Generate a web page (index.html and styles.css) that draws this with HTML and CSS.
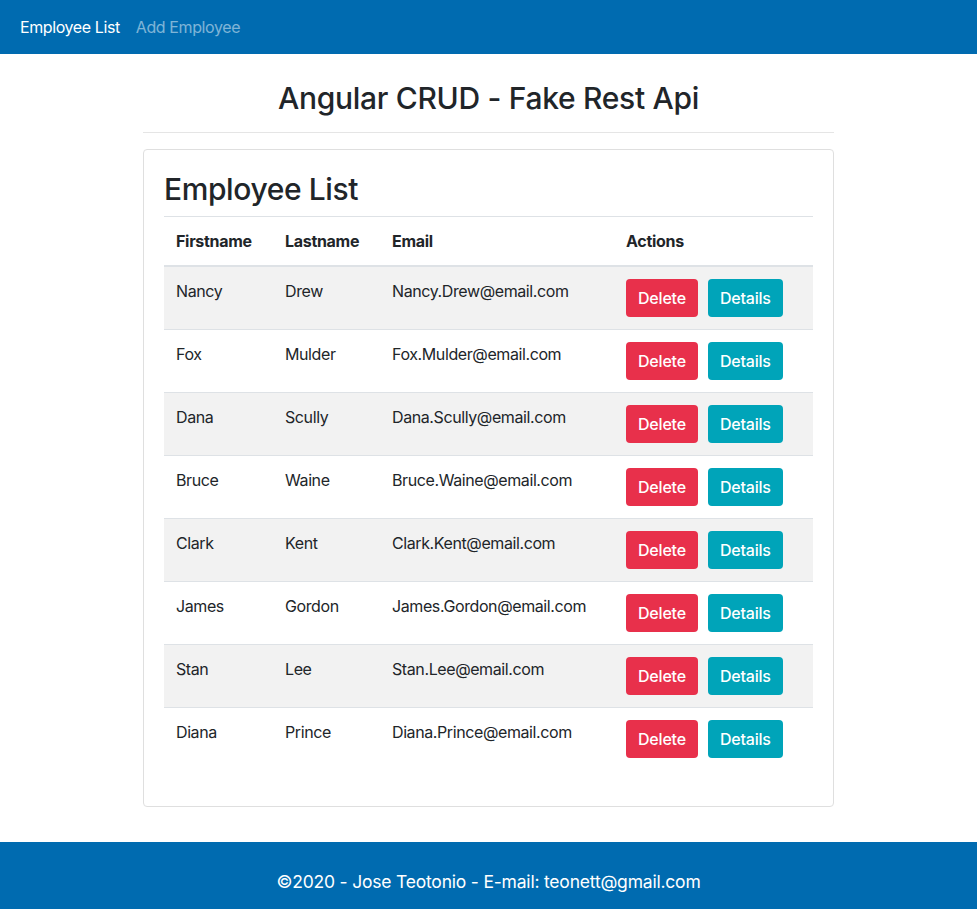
FILE: index.html
```html
<!DOCTYPE html>
<html>
<head>
<meta charset="utf-8">
<link rel="stylesheet" href="styles.css">
</head>
<body>
<nav class="navbar">
  <a class="nav-link active">Employee List</a>
  <a class="nav-link">Add Employee</a>
</nav>
<main class="container">
  <h2 class="page-title">Angular CRUD - Fake Rest Api</h2>
  <hr class="divider">
  <div class="card">
    <h2 class="card-title">Employee List</h2>
    <table class="table">
      <thead>
        <tr><th class="c1">Firstname</th><th class="c2">Lastname</th><th class="c3">Email</th><th class="c4">Actions</th></tr>
      </thead>
      <tbody>
        <tr><td>Nancy</td><td>Drew</td><td>Nancy.Drew@email.com</td><td><button class="btn danger">Delete</button><button class="btn info">Details</button></td></tr>
        <tr><td>Fox</td><td>Mulder</td><td>Fox.Mulder@email.com</td><td><button class="btn danger">Delete</button><button class="btn info">Details</button></td></tr>
        <tr><td>Dana</td><td>Scully</td><td>Dana.Scully@email.com</td><td><button class="btn danger">Delete</button><button class="btn info">Details</button></td></tr>
        <tr><td>Bruce</td><td>Waine</td><td>Bruce.Waine@email.com</td><td><button class="btn danger">Delete</button><button class="btn info">Details</button></td></tr>
        <tr><td>Clark</td><td>Kent</td><td>Clark.Kent@email.com</td><td><button class="btn danger">Delete</button><button class="btn info">Details</button></td></tr>
        <tr><td>James</td><td>Gordon</td><td>James.Gordon@email.com</td><td><button class="btn danger">Delete</button><button class="btn info">Details</button></td></tr>
        <tr><td>Stan</td><td>Lee</td><td>Stan.Lee@email.com</td><td><button class="btn danger">Delete</button><button class="btn info">Details</button></td></tr>
        <tr><td>Diana</td><td>Prince</td><td>Diana.Prince@email.com</td><td><button class="btn danger">Delete</button><button class="btn info">Details</button></td></tr>
      </tbody>
    </table>
  </div>
</main>
<footer class="footer">©2020 - Jose Teotonio - E-mail: teonett@gmail.com</footer>
</body>
</html>
```
FILE: styles.css
```css
* { box-sizing: border-box; }
body {
  margin: 0;
  font-family: Inter, "Noto Sans", sans-serif;
  font-size: 16px;
  line-height: 24px;
  color: #212529;
  background: #fff;
}
.navbar {
  height: 54px;
  background: #006bb0;
  display: flex;
  align-items: center;
  padding: 0 12px;
}
.nav-link {
  padding: 0 8px;
  color: rgba(255,255,255,0.5);
  font-size: 16px;
  letter-spacing: -0.4px;
}
.nav-link.active { color: #fff; }
.container {
  width: 691px;
  margin: 0 auto;
}
.page-title {
  margin: 0;
  padding-top: 25px;
  text-align: center;
  font-size: 30px;
  font-weight: 500;
  line-height: 38px;
  letter-spacing: -0.3px;
}
.divider {
  margin: 15px 0 16px;
  border: 0;
  border-top: 1px solid rgba(0,0,0,0.1);
}
.card {
  border: 1px solid #dfdfdf;
  border-radius: 4px;
  padding: 20px 20px 19px;
}
.card-title {
  margin: 0 0 8px;
  font-size: 30px;
  font-weight: 500;
  line-height: 38px;
  letter-spacing: -0.4px;
}
.table {
  width: 100%;
  border-collapse: collapse;
  margin-bottom: 16px;
}
.table th, .table td {
  text-align: left;
  padding: 12px;
  border-top: 1px solid #dee2e6;
  vertical-align: top;
  letter-spacing: -0.4px;
}
.table th { font-weight: 700; border-bottom: 2px solid #dee2e6; letter-spacing: -0.3px; }
.c1 { width: 109px; }
.c2 { width: 107px; }
.c3 { width: 234px; }
.table tbody tr:nth-child(odd) { background: #f2f2f2; }
.table tbody tr:first-child td { border-top: 0; }
.table td { height: 63px; }
.btn {
  font-family: inherit;
  font-size: 16px;
  line-height: 24px;
  height: 38px;
  padding: 6px 12px;
  border: 0;
  border-radius: 4px;
  color: #fff;
  font-weight: 500;
  letter-spacing: -0.2px;
  vertical-align: top;
}
.btn + .btn { margin-left: 10px; }
.danger { background: #e8304b; }
.info { background: #00a4b9; }
.footer {
  margin-top: 35px;
  height: 67px;
  background: #006bb0;
  color: #fff;
  font-size: 17.5px;
  text-align: center;
  padding-top: 28px;
  letter-spacing: -0.2px;
}
```
